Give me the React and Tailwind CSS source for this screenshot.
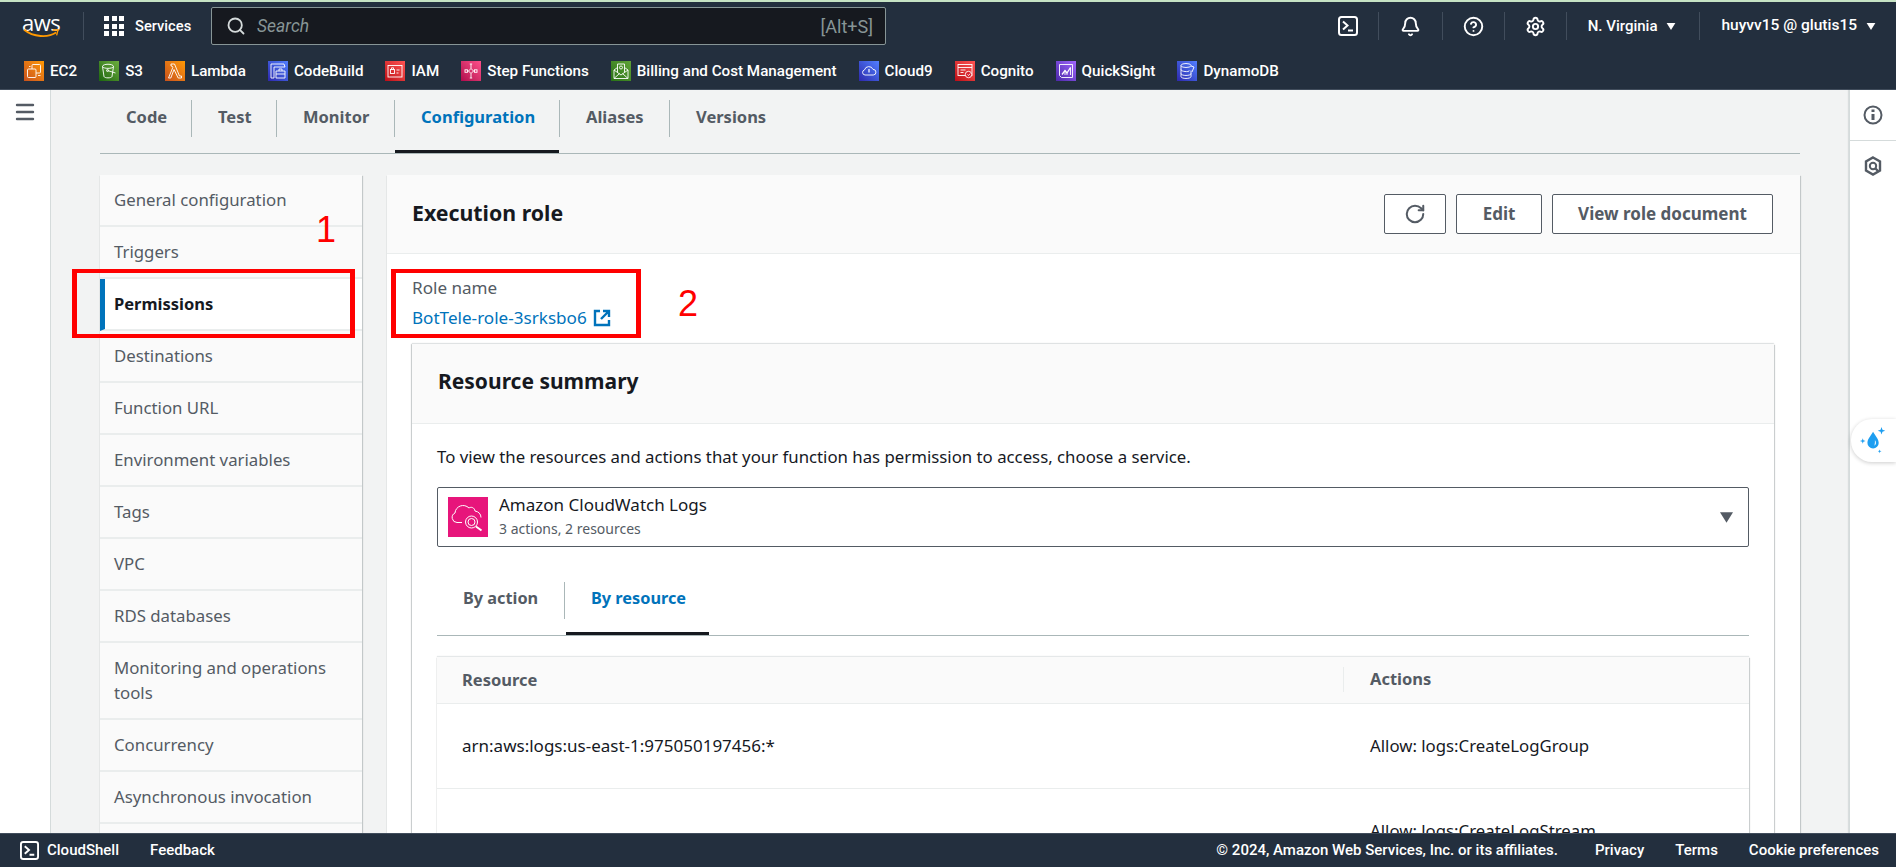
import React from 'react';
import { Bell, Settings, CircleHelp, RotateCw, Search, Menu } from 'lucide-react';

const Term = ({ c = 'w-5 h-5' }) => (
  <svg viewBox="0 0 20 20" className={c} fill="none" stroke="currentColor" strokeWidth="2">
    <rect x="1" y="1" width="18" height="18" rx="2.5" />
    <path d="M5 5.5l4.5 4-4.5 4M10 14.5h5" />
  </svg>
);

const Caret = ({ c }) => (
  <svg viewBox="0 0 10 8" className={c} fill="currentColor"><path d="M0 0h10L5 8z" /></svg>
);

const Sep = () => <div className="w-px h-7 bg-[#414d5c] shrink-0" />;

const G = ({ children }) => (
  <svg viewBox="0 0 20 20" className="w-5 h-5" fill="none" stroke="#fff" strokeWidth="0.9">{children}</svg>
);

const shortcuts = [
  ['EC2', 'from-[#c8511b] to-[#ff9900]', <G><rect x="3.500" y="8" width="8.500" height="8.500" rx="1" /><path d="M8 8V4.500a1 1 0 0 1 1-1h6.500a1 1 0 0 1 1 1V11a1 1 0 0 1-1 1H12" /><path d="M14 14.500h2.500M5 5.500h1.500" /></G>],
  ['S3', 'from-[#1b660f] to-[#6cae3e]', <G><path d="M3.500 5.500c0-3 11-3 11 0l-1.500 10c-.5 1.800-7.500 1.800-8 0z" /><path d="M3.500 5.500c1 2.500 10 2.500 11 0" /><path d="M8.500 9.500l8 2.500" /><circle cx="8.500" cy="9.500" r="1" /></G>],
  ['Lambda', 'from-[#c8511b] to-[#ff9900]', <G><path d="M6 3h3.500l5 12h2v2h-3.300L9 8.500 5.800 17H3.500l4.300-10.500L7 5H6z" /></G>],
  ['CodeBuild', 'from-[#2e27ad] to-[#527fff]', <G><path d="M3 17V3h13l1 3H6v11zM8 17v-7h9v7zM8 13h9M11 10V8h3v2" /></G>],
  ['IAM', 'from-[#bd0816] to-[#ff5252]', <G><rect x="3" y="4.500" width="14" height="11.500" /><rect x="5.500" y="8.500" width="4" height="4" /><path d="M6.500 8.500V6.800h2v1.700M11.500 9h3M11.500 12h2" /></G>],
  ['Step Functions', 'from-[#b0084d] to-[#ff4f8b]', <G><path d="M7.500 10L10 7.500 12.500 10 10 12.500z" /><rect x="4" y="8.800" width="2.500" height="2.500" /><rect x="13.500" y="8.800" width="2.500" height="2.500" /><path d="M10 3v4.500M10 12.500V17M6.500 10h1M12.500 10h1M8.800 3h2.400M8.800 17h2.400" /></G>],
  ['Billing and Cost Management', 'from-[#277116] to-[#60a337]', <G><path d="M3 9l3.500-2.500M17 9l-3.500-2.500M3 9v8.500h14V9M3 9l7 5 7-5M3 17.500l5.500-5M17 17.500l-5.500-5" /><path d="M6.500 11V3h7v8" /><circle cx="10" cy="6.500" r="1.500" /></G>],
  ['Cloud9', 'from-[#2e27ad] to-[#527fff]', <G><path d="M6 14a2.600 2.600 0 0 1-.5-5.100 4.500 4.500 0 0 1 8.500-.5 2.800 2.800 0 0 1 .3 5.600z" /><path d="M10 8v3.500" strokeWidth="1.200" /></G>],
  ['Cognito', 'from-[#bd0816] to-[#ff5252]', <G><rect x="3" y="3.500" width="14" height="11" /><path d="M3 6.500h14M5.500 9h5M5.500 11.500h3" /><circle cx="13.500" cy="13.500" r="3.200" fill="#d7202b" /><path d="M12.500 13.500l1 1 1.500-1.800" /></G>],
  ['QuickSight', 'from-[#4d27a8] to-[#a166ff]', <G><path d="M3.500 3.500H16.500V16.500H5.500L3.500 14.500z" /><path strokeWidth="1.300" d="M6 13.500l3-4 2 2.500 3.500-5.500" /><path d="M9 9.500v4.500M11 12v2M14.500 6.500v7.500" /></G>],
  ['DynamoDB', 'from-[#2e27ad] to-[#527fff]', <G><ellipse cx="9" cy="4.500" rx="5" ry="2" /><path d="M4 4.500v11c0 2.600 10 2.600 10 0v-6M4 8.500c0 2.600 10 2.600 8 1M4 12.500c0 2.600 10 2.600 10 0M14 5l3 1-2 5" /></G>],
];

const navItems = [
  ['General configuration', 'h-[52px]'],
  ['Triggers', 'h-[52px]'],
  ['Permissions', 'h-[52px]', true],
  ['Destinations', 'h-[52px]'],
  ['Function URL', 'h-[52px]'],
  ['Environment variables', 'h-[52px]'],
  ['Tags', 'h-[52px]'],
  ['VPC', 'h-[52px]'],
  ['RDS databases', 'h-[52px]'],
  ['Monitoring and operations tools', 'h-[77px]'],
  ['Concurrency', 'h-[52px]'],
  ['Asynchronous invocation', 'h-[52px]'],
  ['', 'h-[52px]'],
];

const tabs = [
  ['Code', 'w-[92px] pl-[26px]'],
  ['Test', 'w-[85px] pl-[26px]'],
  ['Monitor', 'w-[118px] pl-[26px]'],
  ['Configuration', 'w-[165px] pl-[26px]', true],
  ['Aliases', 'w-[110px] pl-[26px]'],
  ['Versions', 'w-[110px] pl-[26px]'],
];

export default function App() {
  return (
    <div className="relative h-screen w-full flex flex-col overflow-hidden bg-white font-['Noto_Sans',sans-serif] text-[16.8px] text-[#16191f]">
      <div className="h-[2px] bg-[#c6e3c4] shrink-0" />
      <header className="h-[48px] bg-[#232f3e] flex items-center text-white shrink-0 text-[15px] font-['Roboto',sans-serif]">
        <div className="w-[83px] pl-[22px] shrink-0">
          <div className="w-[39px] h-[28px] relative">
            <span className="block font-['Open_Sans',sans-serif] text-[22px] leading-[22px] tracking-[-0.5px] -mt-[3px]">aws</span>
            <svg viewBox="0 0 40 12" className="absolute left-0 top-[17px] w-[39px] h-[11px]" fill="none" stroke="#ff9900" strokeWidth="2">
              <path d="M1 2c10 8 26 9 35 3" />
              <path d="M32 2.500l6-.5-1.500 6" strokeWidth="1.500" />
            </svg>
          </div>
        </div>
        <Sep />
        <div className="ml-[20px] w-5 h-5 grid grid-cols-3 gap-[2.5px] shrink-0">
          {[1, 2, 3, 4, 5, 6, 7, 8, 9].map((i) => <div key={i} className="bg-white" />)}
        </div>
        <span className="ml-[11px] w-[76px] mt-[1px] font-medium text-[14.7px]">Services</span>
        <div className="w-[675px] h-[38px] bg-[#16191f] border border-[#879596] rounded-[2px] flex items-center pl-[14px] pr-[12px] shrink-0">
          <Search size={20} strokeWidth={2.2} className="text-[#d5dbdb]" />
          <span className="ml-[11px] mt-[1px] italic text-[#879596] text-[17.5px]">Search</span>
          <span className="ml-auto mt-[1px] text-[#879596] text-[18px]">[Alt+S]</span>
        </div>
        <div className="ml-auto flex items-center">
          <Term />
          <div className="ml-[20px]"><Sep /></div>
          <Bell size={21} strokeWidth={2.2} className="ml-[21px]" />
          <div className="ml-[21px]"><Sep /></div>
          <CircleHelp size={21} strokeWidth={2.2} className="ml-[20px]" />
          <div className="ml-[20px]"><Sep /></div>
          <Settings size={21} strokeWidth={2.2} className="ml-[20px]" />
          <div className="ml-[20px]"><Sep /></div>
          <span className="ml-[21px] font-medium">N. Virginia</span>
          <Caret c="ml-[8px] w-[10px] h-[7px]" />
          <div className="ml-[23px]"><Sep /></div>
          <span className="ml-[22px] font-medium text-[15.5px]">huyvv15 @ glutis15</span>
          <Caret c="ml-[9px] mr-[20px] w-[10px] h-[7px]" />
        </div>
      </header>
      <nav className="h-[40px] bg-[#232f3e] border-b border-[#414d5c] pt-[3px] pl-[24px] flex items-center gap-[22px] text-white text-[15.2px] font-medium font-['Roboto',sans-serif] shrink-0">
        {shortcuts.map(([name, grad, glyph]) => (
          <div key={name} className="flex items-center gap-[6px]">
            <div className={`w-5 h-5 bg-linear-to-tr ${grad}`}>{glyph}</div>
            <span>{name}</span>
          </div>
        ))}
      </nav>

      <div className="flex-1 flex min-h-0">
        <aside className="w-[51px] bg-white border-r border-[#d5dbdb] shrink-0 flex justify-center pt-[10px]">
          <Menu size={24} strokeWidth={2.4} className="text-[#545b64]" />
        </aside>
        <main className="flex-1 min-w-0 bg-[#f2f3f3] px-[49px] pt-[10px] overflow-hidden">
          <div className="flex h-[54px] border-b border-[#aab7b8] font-bold text-[#545b64] text-[16.5px]">
            {tabs.map(([name, w, active], i) => (
              <div key={name} className={`relative ${w} h-[37px] pb-[2px] flex items-center shrink-0 ${i < 5 ? 'border-r border-[#aab7b8]' : ''} ${active ? 'text-[#0073bb]' : ''}`}>
                {name}
                {active && <div className="absolute left-0 right-0 top-[50px] h-[3px] bg-[#16191f]" />}
              </div>
            ))}
          </div>
          <div className="flex gap-[25px] mt-[21px] items-start">
            <div className="w-[262px] shrink-0 bg-[#fafafa] shadow-[0_1px_1px_0_rgba(0,28,36,0.3),1px_1px_1px_0_rgba(0,28,36,0.15)]">
              {navItems.map(([name, h, active], i) => (
                <div key={i} className={`${h} flex items-center px-[14px] pb-[2px] border-b-2 border-[#eaeded] leading-[25px] ${active ? 'bg-white font-bold text-[16.5px] text-[#16191f] border-l-[5px] border-l-[#0073bb] pl-[9px]' : 'text-[#545b64]'}`}>
                  {name}
                </div>
              ))}
            </div>
            <section className="flex-1 min-w-0 bg-white shadow-[0_1px_1px_0_rgba(0,28,36,0.3),1px_1px_1px_0_rgba(0,28,36,0.15)]">
              <div className="h-[79px] bg-[#fafafa] border-b border-[#eaeded] flex items-center pl-[25px] pr-[27px]">
                <h2 className="text-[21.3px] font-bold -mt-[2px]">Execution role</h2>
                <div className="ml-auto flex gap-[10px] font-bold text-[#545b64] text-[17px]">
                  <button className="w-[62px] h-[40px] bg-white border border-[#545b64] rounded-[2px] flex items-center justify-center">
                    <RotateCw size={22} strokeWidth={2.2} />
                  </button>
                  <button className="w-[86px] h-[40px] bg-white border border-[#545b64] rounded-[2px]">Edit</button>
                  <button className="w-[221px] h-[40px] bg-white border border-[#545b64] rounded-[2px]">View role document</button>
                </div>
              </div>
              <div className="pl-[25px] pt-[21px] text-[17.1px]">
                <div className="h-[26px] leading-[26px] text-[#545b64]">Role name</div>
                <div className="h-[28px] flex items-center text-[#0073bb] gap-[6px] mt-[3px]">
                  BotTele-role-3srksbo6
                  <svg viewBox="0 0 18 18" className="w-[18px] h-[18px]" fill="none" stroke="currentColor" strokeWidth="2.400">
                    <path d="M7 2H2v14h14v-5M10 2h6v6M16 2L8 10" />
                  </svg>
                </div>
              </div>
              <div className="ml-[25px] mr-[26px] mt-[12px] shadow-[0_1px_1px_0_rgba(0,28,36,0.3),1px_1px_1px_0_rgba(0,28,36,0.15),-1px_0_1px_0_rgba(0,28,36,0.15),0_-1px_1px_0_rgba(0,28,36,0.1)]">
                <div className="h-[80px] bg-[#fafafa] border-b border-[#eaeded] flex items-center pl-[26px]">
                  <h3 className="text-[21px] font-bold -mt-[4px]">Resource summary</h3>
                </div>
                <div className="px-[25px] pt-[22px]">
                  <p className="leading-[22px]">To view the resources and actions that your function has permission to access, choose a service.</p>
                  <div className="mt-[19px] h-[60px] border border-[#545b64] rounded-[2px] flex items-center pl-[10px] pr-[15px]">
                    <div className="w-10 h-10 bg-[#e7157b] shrink-0">
                      <svg viewBox="0 0 40 40" className="w-10 h-10" fill="none" stroke="#fff" strokeWidth="1">
                        <path d="M14 25.500h-5a5 5 0 0 1-2-9.500c.5-7 9-10 14-5 2-1.500 5.500-.5 6 3 3.500.5 6 3 6 6.500" />
                        <circle cx="23.500" cy="25" r="6" />
                        <circle cx="23.500" cy="25" r="3.500" />
                        <path d="M28 29.500l5.500 4" strokeWidth="2" />
                      </svg>
                    </div>
                    <div className="ml-[11px]">
                      <div className="leading-[22px] -mt-[1px] text-[17px]">Amazon CloudWatch Logs</div>
                      <div className="text-[14px] leading-[20px] mt-[3px] text-[#545b64]">3 actions, 2 resources</div>
                    </div>
                    <Caret c="ml-auto w-[13px] h-[11px] text-[#545b64]" />
                  </div>
                  <div className="mt-[35px] flex h-[54px] border-b border-[#aab7b8] font-bold text-[#545b64] text-[16.3px]">
                    <div className="w-[128px] h-[37px] pl-[26px] pb-[4px] flex items-center border-r border-[#aab7b8]">By action</div>
                    <div className="relative w-[143px] h-[37px] pl-[25px] pb-[4px] ml-px flex items-center text-[#0073bb]">
                      By resource
                      <div className="absolute left-0 right-0 top-[50px] h-[3px] bg-[#16191f]" />
                    </div>
                  </div>
                  <div className="mt-[21px] shadow-[0_1px_1px_0_rgba(0,28,36,0.3),1px_1px_1px_0_rgba(0,28,36,0.15),0_-1px_1px_0_rgba(0,28,36,0.1)]">
                    <div className="h-[47px] pb-[2px] bg-[#fafafa] border-b border-[#eaeded] flex items-center font-bold text-[#545b64] text-[16.5px]">
                      <div className="w-[907px] pl-[25px] h-[25px] leading-[25px] border-r border-[#eaeded]">Resource</div>
                      <div className="pl-[26px]">Actions</div>
                    </div>
                    <div className="h-[85px] border-b border-[#eaeded] flex items-center">
                      <div className="w-[907px] pl-[25px] text-[17px]">arn:aws:logs:us-east-1:975050197456:*</div>
                      <div className="pl-[26px]">Allow: logs:CreateLogGroup</div>
                    </div>
                    <div className="h-[120px] flex">
                      <div className="w-[907px] pl-[25px]"></div>
                      <div className="pl-[26px] pt-[29px]">Allow: logs:CreateLogStream</div>
                    </div>
                  </div>
                </div>
              </div>
            </section>
          </div>
        </main>
        <aside className="w-[47px] bg-white border-l border-[#d5dbdb] shrink-0 shadow-[-1px_0_1px_0_rgba(0,28,36,0.1)]">
          <div className="h-[51px] border-b border-[#d5dbdb] flex justify-center items-center text-[#545b64]">
            <svg viewBox="0 0 20 20" className="w-5 h-5" fill="none" stroke="currentColor" strokeWidth="2">
              <circle cx="10" cy="10" r="8.500" />
              <path strokeWidth="3" d="M10 9v6M10 4.500v2.500" />
            </svg>
          </div>
          <div className="h-[52px] pb-[2px] flex justify-center items-center text-[#545b64]">
            <svg viewBox="0 0 20 20" className="w-5 h-5" fill="none" stroke="currentColor" strokeWidth="2.400">
              <path d="M10 1.500l7 4v9l-7 4-7-4v-9z" />
              <circle cx="10" cy="10" r="3.200" strokeWidth="2" />
              <path d="M12 12l3 3" />
            </svg>
          </div>
        </aside>
      </div>

      <footer className="h-[34px] bg-[#232f3e] text-white text-[15px] font-medium font-['Roboto',sans-serif] flex items-center shrink-0 border-t border-[#414d5c]">
        <div className="ml-[20px] flex items-center">
          <Term c="w-[19px] h-[19px]" />
          <span className="ml-[8px]">CloudShell</span>
        </div>
        <span className="ml-[31px]">Feedback</span>
        <div className="ml-auto flex items-center gap-[31px] pr-[17px]">
          <span className="mr-[6px]">© 2024, Amazon Web Services, Inc. or its affiliates.</span>
          <span>Privacy</span>
          <span>Terms</span>
          <span>Cookie preferences</span>
        </div>
      </footer>

      {/* overlays */}
      <div className="absolute left-[1851px] top-[419px] w-[45px] h-[43px] bg-white rounded-l-[21px] shadow-[0_1px_4px_rgba(0,0,0,0.2)] flex items-center justify-center">
        <svg viewBox="0 0 32 32" className="w-[30px] h-[30px]" fill="#1e9ef0">
          <path d="M15 6c3 5 6 8 6 12a6 6 0 0 1-12 0c0-4 3-7 6-12z" />
          <path fill="#fff" d="M17 15c1.500 2 1.500 5-.500 6 .500-2 .500-4 .500-6z" />
          <path d="M24 1l1 3 3 1-3 1-1 3-1-3-3-1 3-1zM4 13l.7 2.300L7 16l-2.300.7L4 19l-.7-2.300L1 16l2.300-.7zM22 25l.5 1.500 1.500.5-1.500.5-.5 1.500-.5-1.500-1.500-.5 1.500-.5z" />
        </svg>
      </div>
      <div className="absolute left-[72px] top-[269px] w-[283px] h-[69px] border-x-[5px] border-y-4 border-[#ff0000]" />
      <div className="absolute left-[391px] top-[269px] w-[250px] h-[69px] border-x-[5px] border-y-4 border-[#ff0000]" />
      <span className="absolute left-[316px] top-[209px] text-[36px] leading-[42px] text-[#ff0000] font-['Liberation_Sans',sans-serif]">1</span>
      <span className="absolute left-[678px] top-[283px] text-[36px] leading-[42px] text-[#ff0000] font-['Liberation_Sans',sans-serif]">2</span>
    </div>
  );
}
